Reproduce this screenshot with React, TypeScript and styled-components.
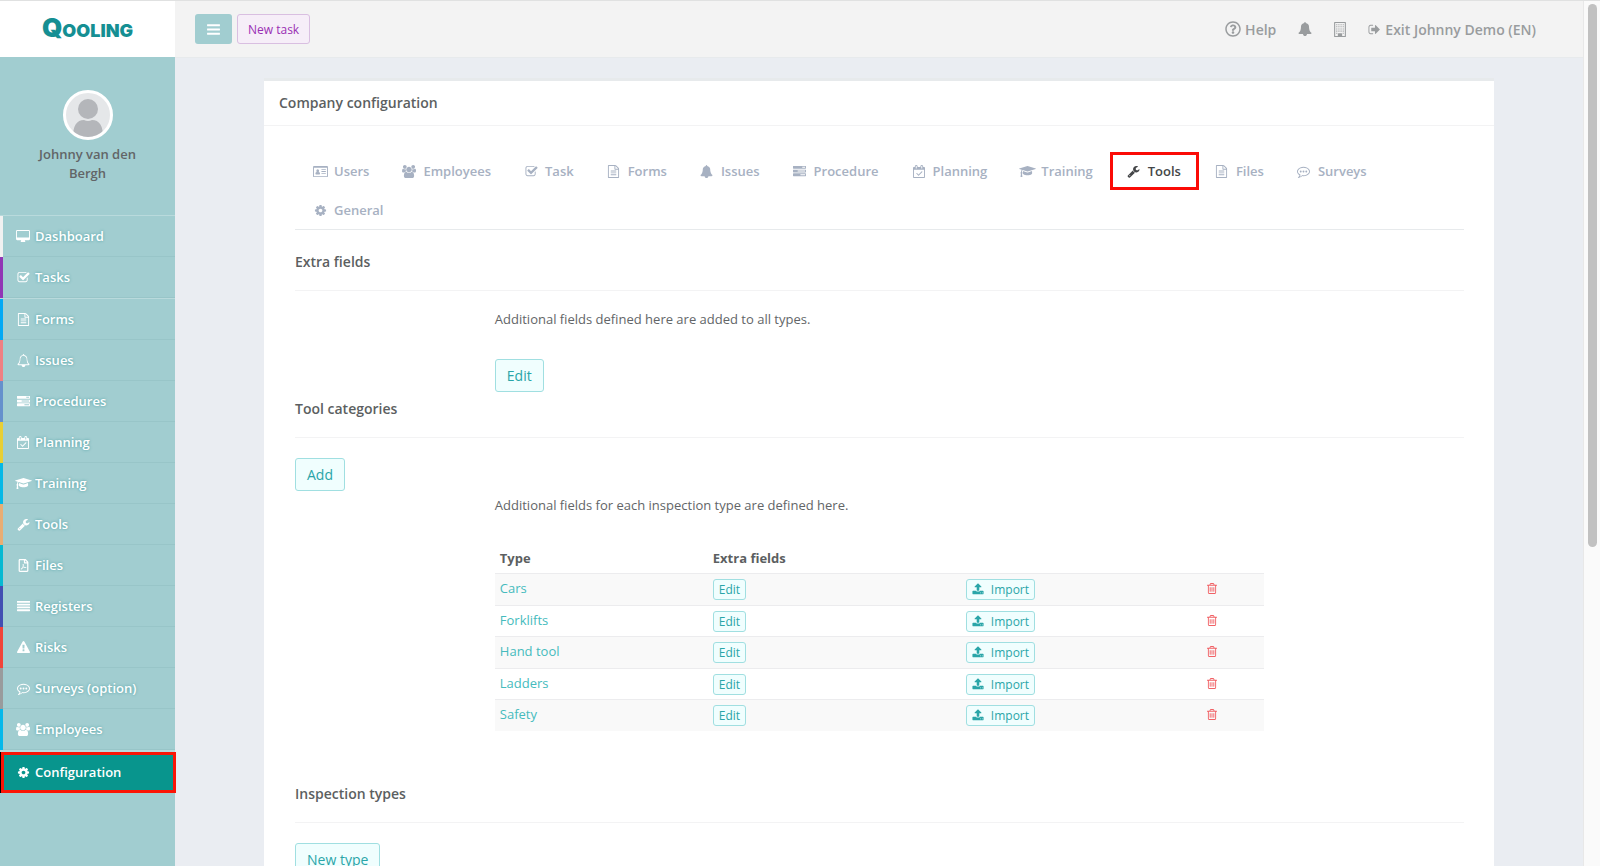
import React from 'react';
import styled, { createGlobalStyle, css } from 'styled-components';
import { FaRegQuestionCircle, FaRegFilePdf } from 'react-icons/fa';

const GlobalStyle = createGlobalStyle`
  *, *::before, *::after { box-sizing: border-box; }
  body {
    margin: 0;
    font: 400 13px/19px "Open Sans", "Noto Sans", sans-serif;
    color: #626567;
    background: #eaedf2;
  }
  a { color: inherit; text-decoration: none; }
  h1, h2, p, ul { margin: 0; padding: 0; }
  ul { list-style: none; }
  button { font: inherit; cursor: pointer; }
`;

/* ---------- icons ---------- */

type Glyph = { w: number; d: string };

const bar = (x: number, y: number, w: number) =>
  `M${x + w} ${y}v128q0 26-19 45t-45 19h-${w - 128}q-26 0-45-19t-19-45v-128q0-26 19-45t45-19h${w - 128}q26 0 45 19t19 45z`;

const dot = (x: number) =>
  `M${x} 896q0 53-37.5 90.5t-90.5 37.5-90.5-37.5-37.5-90.5 37.5-90.5 90.5-37.5 90.5 37.5 37.5 90.5z`;

const windows = [256, 512, 768, 1024]
  .flatMap((y) => [256, 512, 768, 1024].map((x) => `M${x} ${y}h128v128h-128z`))
  .join('');

const bellOutline =
  'M1728 1408q0 52-38 90t-90 38h-448q0 106-75 181t-181 75-181-75-75-181h-448q-52 0-90-38t-38-90q50-42 91-88t85-119.5 74.5-158.5 50-206 19.5-260q0-152 117-282.5t307-158.5q-8-19-8-39 0-40 28-68t68-28 68 28 28 68q0 20-8 39 190 28 307 158.5t117 282.5q0 139 19.5 260t50 206 74.5 158.5 85 119.5 91 88z';

const glyphs = {
  desktop: {
    w: 1920,
    d: 'M1792 992v-832q0-13-9.5-22.5t-22.5-9.5h-1600q-13 0-22.5 9.5t-9.5 22.5v832q0 13 9.5 22.5t22.5 9.5h1600q13 0 22.5-9.5t9.5-22.5zm128-832v1088q0 66-47 113t-113 47h-544q0 37 16 77.5t32 71 16 43.5q0 26-19 45t-45 19h-512q-26 0-45-19t-19-45q0-14 16-44t32-70 16-78h-544q-66 0-113-47t-47-113v-1088q0-66 47-113t113-47h1600q66 0 113 47t47 113z',
  },
  check: {
    w: 1792,
    d: 'M1472 930v318q0 119-84.5 203.5t-203.5 84.5h-832q-119 0-203.5-84.5t-84.5-203.5v-832q0-119 84.5-203.5t203.5-84.5h832q63 0 117 25 15 7 18 23 3 17-9 29l-49 49q-10 10-23 10-3 0-9-2-23-6-45-6h-832q-66 0-113 47t-47 113v832q0 66 47 113t113 47h832q66 0 113-47t47-113v-254q0-13 9-22l64-64q10-10 23-10 6 0 12 3 20 8 20 29zm231-489l-814 814q-24 24-57 24t-57-24l-430-430q-24-24-24-57t24-57l110-110q24-24 57-24t57 24l263 263 647-647q24-24 57-24t57 24l110 110q24 24 24 57t-24 57z',
  },
  file: {
    w: 1792,
    d: 'M1596 380q28 28 48 76t20 88v1152q0 40-28 68t-68 28h-1344q-40 0-68-28t-28-68v-1600q0-40 28-68t68-28h896q40 0 88 20t76 48zm-444-244v376h376q-10-29-22-41l-313-313q-12-12-41-22zm384 1528v-1024h-416q-40 0-68-28t-28-68v-416h-768v1536h1280zm-1024-864q0-14 9-23t23-9h704q14 0 23 9t9 23v64q0 14-9 23t-23 9h-704q-14 0-23-9t-9-23v-64zm736 224q14 0 23 9t9 23v64q0 14-9 23t-23 9h-704q-14 0-23-9t-9-23v-64q0-14 9-23t23-9h704zm0 256q14 0 23 9t9 23v64q0 14-9 23t-23 9h-704q-14 0-23-9t-9-23v-64q0-14 9-23t23-9h704z',
  },
  bell: { w: 1792, d: bellOutline },
  bellOpen: {
    w: 1792,
    d: `${bellOutline}M246 1408H1546Q1430 1270 1380 1090T1320 640Q1320 500 1210 400T896 256T582 400T472 640Q472 910 412 1090T246 1408z`,
  },
  tasks: {
    w: 1792,
    d: 'M1024 1408h640v-128h-640v128zm-384-512h1024v-128h-1024v128zm640-512h384v-128h-384v128zm512 832v256q0 26-19 45t-45 19h-1664q-26 0-45-19t-19-45v-256q0-26 19-45t45-19h1664q26 0 45 19t19 45zm0-512v256q0 26-19 45t-45 19h-1664q-26 0-45-19t-19-45v-256q0-26 19-45t45-19h1664q26 0 45 19t19 45zm0-512v256q0 26-19 45t-45 19h-1664q-26 0-45-19t-19-45v-256q0-26 19-45t45-19h1664q26 0 45 19t19 45z',
  },
  calendar: {
    w: 1664,
    d: 'M1303 964l-512 512q-10 9-23 9t-23-9l-288-288q-9-10-9-23t9-22l46-46q9-9 22-9t23 9l220 220 444-444q10-9 23-9t22 9l46 46q9 9 9 22t-9 23zm-1175 700h1408v-1024h-1408v1024zm384-1216v-288q0-14-9-23t-23-9h-64q-14 0-23 9t-9 23v288q0 14 9 23t23 9h64q14 0 23-9t9-23zm768 0v-288q0-14-9-23t-23-9h-64q-14 0-23 9t-9 23v288q0 14 9 23t23 9h64q14 0 23-9t9-23zm384-64v1280q0 52-38 90t-90 38h-1408q-52 0-90-38t-38-90v-1280q0-52 38-90t90-38h128v-96q0-66 47-113t113-47h64q66 0 113 47t47 113v96h384v-96q0-66 47-113t113-47h64q66 0 113 47t47 113v96h128q52 0 90 38t38 90z',
  },
  cap: {
    w: 2304,
    d: 'M1774 836l18 316q4 69-82 128t-235 93.5-323 34.5-323-34.5-235-93.5-82-128l18-316 574 181q22 7 48 7t48-7zm530-324q0 23-22 31l-1120 352q-4 1-10 1t-10-1l-652-206q-43 34-71 111.5t-34 178.5q63 36 63 109 0 69-58 107l58 433q2 14-8 25-9 11-24 11h-192q-15 0-24-11-10-11-8-25l58-433q-58-38-58-107 0-73 65-111 11-207 98-330l-333-104q-22-8-22-31t22-31l1120-352q4-1 10-1t10 1l1120 352q22 8 22 31z',
  },
  wrench: {
    w: 1792,
    d: 'M448 1472q0-26-19-45t-45-19-45 19-19 45 19 45 45 19 45-19 19-45zm644-420l-682 682q-37 37-90 37-52 0-91-37l-106-108q-38-36-38-90 0-53 38-91l681-681q39 98 114.5 173.5t173.5 114.5zm634-435q0 39-23 106-47 134-164.5 217.5t-258.5 83.5q-185 0-316.5-131.5t-131.5-316.5 131.5-316.5 316.5-131.5q58 0 121.5 16.5t107.5 46.5q16 11 16 28t-16 28l-293 169v224l193 107q5-3 79-48.5t135.5-81 70.5-35.5q15 0 23.5 10t8.5 25z',
  },
  lines: { w: 1792, d: [320, 704, 1088, 1472].map((y) => bar(0, y - 128, 1792)).join('') },
  menu: { w: 1792, d: [320, 832, 1344].map((y) => bar(128, y, 1536)).join('') },
  warning: {
    w: 1792,
    d: 'M1024 1375v-190q0-14-9.5-23.5t-22.5-9.5h-192q-13 0-22.5 9.5t-9.5 23.5v190q0 14 9.5 23.5t22.5 9.5h192q13 0 22.5-9.5t9.5-23.5zm-2-374l18-459q0-12-10-19-13-11-24-11h-220q-11 0-24 11-10 7-10 21l17 457q0 10 10 16.5t24 6.5h185q14 0 23.5-6.5t10.5-16.5zm-14-934l768 1408q35 63-2 126-17 29-46.5 46t-63.5 17h-1536q-34 0-63.5-17t-46.5-46q-37-63-2-126l768-1408q17-31 47-49t65-18 65 18 47 49z',
  },
  comment: {
    w: 1792,
    d: `${dot(640)}${dot(1024)}${dot(1408)}M896 384q-204 0-381.5 69.5t-282 187.5-104.5 255q0 112 71.5 213.5t201.5 175.5l87 50-27 96q-24 91-70 172 152-63 275-171l43-38 57 6q69 8 130 8 204 0 381.5-69.5t282-187.5 104.5-255-104.5-255-282-187.5-381.5-69.5zm896 512q0 174-120 321.5t-326 233-450 85.5q-70 0-145-8-198 175-460 242-49 14-114 22h-5q-15 0-27-10.5t-16-27.5v-1q-3-4-.5-12t2-10 4.5-9.5l6-9 7-8.5 8-9q7-8 31-34.5t34.5-38 31-39.5 32.5-51 27-59 26-76q-157-89-247.5-220t-90.5-281q0-174 120-321.5t326-233 450-85.5 450 85.5 326 233 120 321.5z`,
  },
  users: {
    w: 1920,
    d: 'M593 896q-162 5-265 128h-134q-82 0-138-40.5t-56-118.5q0-353 124-353 6 0 43.5 21t97.5 42.5 119 21.5q67 0 133-23-5 37-5 66 0 159 93 256zm1071 637q0 120-73 189.5t-194 69.5h-874q-121 0-194-69.5t-73-189.5q0-53 3.5-103.5t14-109 26.5-108.5 43-97.5 62-81 85.5-53.5 111.5-20q10 0 43 21.5t73 48 107 48 135 21.5 135-21.5 107-48 73-48 43-21.5q61 0 111.5 20t85.5 53.5 62 81 43 97.5 26.5 108.5 14 109 3.5 103.5zm-1024-1277q0 106-75 181t-181 75-181-75-75-181 75-181 181-75 181 75 75 181zm704 384q0 159-112.5 271.5t-271.5 112.5-271.5-112.5-112.5-271.5 112.5-271.5 271.5-112.5 271.5 112.5 112.5 271.5zm576 225q0 78-56 118.5t-138 40.5h-134q-103-123-265-128 93-97 93-256 0-29-5-66 66 23 133 23 59 0 119-21.5t97.5-42.5 43.5-21q124 0 124 353zm-128-609q0 106-75 181t-181 75-181-75-75-181 75-181 181-75 181 75 75 181z',
  },
  cog: {
    w: 1792,
    d: 'M1152 896q0-106-75-181t-181-75-181 75-75 181 75 181 181 75 181-75 75-181zm512-109v222q0 12-8 23t-20 13l-185 28q-19 54-39 91 35 50 107 138 10 12 10 25t-9 23q-27 37-99 108t-94 71q-12 0-26-9l-138-108q-44 23-91 38-16 136-29 186-7 28-36 28h-222q-14 0-24.5-8.5t-11.5-21.5l-28-184q-49-16-90-37l-141 107q-10 9-25 9-14 0-25-11-126-114-165-168-7-10-7-23 0-12 8-23 15-21 51-66.5t54-70.5q-27-50-41-99l-183-27q-13-2-21-12.5t-8-23.5v-222q0-12 8-23t19-13l186-28q14-46 39-92-40-57-107-138-10-12-10-24 0-10 9-23 26-36 98.5-107.5t94.5-71.5q13 0 26 10l138 107q44-23 91-38 16-136 29-186 7-28 36-28h222q14 0 24.5 8.5t11.5 21.5l28 184q49 16 90 37l142-107q9-9 24-9 13 0 25 10 129 119 165 170 7 8 7 22 0 12-8 23-15 21-51 66.5t-54 70.5q26 50 41 98l183 28q13 2 21 12.5t8 23.5z',
  },
  upload: {
    w: 1792,
    d: 'M1344 1472q0-26-19-45t-45-19-45 19-19 45 19 45 45 19 45-19 19-45zm256 0q0-26-19-45t-45-19-45 19-19 45 19 45 45 19 45-19 19-45zm128-224v320q0 40-28 68t-68 28h-1472q-40 0-68-28t-28-68v-320q0-40 28-68t68-28h427q21 56 70.5 92t110.5 36h256q61 0 110.5-36t70.5-92h427q40 0 68 28t28 68zm-325-648q-17 40-59 40h-256v448q0 26-19 45t-45 19h-256q-26 0-45-19t-19-45v-448h-256q-42 0-59-40-17-39 14-69l448-448q18-19 45-19t45 19l448 448q31 30 14 69z',
  },
  trash: {
    w: 1408,
    d: 'M512 736v576q0 14-9 23t-23 9h-64q-14 0-23-9t-9-23v-576q0-14 9-23t23-9h64q14 0 23 9t9 23zm256 0v576q0 14-9 23t-23 9h-64q-14 0-23-9t-9-23v-576q0-14 9-23t23-9h64q14 0 23 9t9 23zm256 0v576q0 14-9 23t-23 9h-64q-14 0-23-9t-9-23v-576q0-14 9-23t23-9h64q14 0 23 9t9 23zm128 724v-948h-896v948q0 22 7 40.5t14.5 27 10.5 8.5h832q3 0 10.5-8.5t14.5-27 7-40.5zm-672-1076h448l-48-117q-7-9-17-11h-317q-10 2-17 11zm928 32v64q0 14-9 23t-23 9h-96v948q0 83-47 143.5t-113 60.5h-832q-66 0-113-58.5t-47-141.5v-952h-96q-14 0-23-9t-9-23v-64q0-14 9-23t23-9h309l70-167q15-37 54-63t79-26h320q40 0 79 26t54 63l70 167h309q14 0 23 9t9 23z',
  },
  exit: {
    w: 1792,
    d: 'M704 1440q0 4 1 20t.5 26.5-3 23.5-10 19.5-20.5 6.5h-320q-119 0-203.5-84.5t-84.5-203.5v-704q0-119 84.5-203.5t203.5-84.5h320q13 0 22.5 9.5t9.5 22.5q0 4 1 20t.5 26.5-3 23.5-10 19.5-20.5 6.5h-320q-66 0-113 47t-47 113v704q0 66 47 113t113 47h312l11.5 1 11.5 3 8 5.5 7 9 2 13.5zm928-544q0 26-19 45l-544 544q-19 19-45 19t-45-19-19-45v-288h-448q-26 0-45-19t-19-45v-384q0-26 19-45t45-19h448v-288q0-26 19-45t45-19 45 19l544 544q19 19 19 45z',
  },
  building: {
    w: 1408,
    d: `M64 0H1344q64 0 64 64V1728q0 64-64 64H64q-64 0-64-64V64Q0 0 64 0zM128 128V1664H448V1408q0-64 64-64H896q64 0 64 64V1664H1280V128z${windows}M256 1280h128v128h-128zM1024 1280h128v128h-128z`,
  },
  card: {
    w: 2048,
    d: 'M128 128H1920q128 0 128 128V1536q0 128-128 128H128q-128 0-128-128V256Q0 128 128 128zM128 384V1536H1920V384zM640 576q192 0 192 208t-192 208-192-208 192-208zM480 960q160 110 320 0 160 30 160 260 0 100-100 100H420q-100 0-100-100 0-230 160-260zM1152 576h608v128h-608zM1152 832h608v128h-608zM1152 1088h608v128h-608z',
  },
} satisfies Record<string, Glyph>;

type GlyphName = keyof typeof glyphs;

const IconSvg = styled.svg`
  display: block;
  flex: none;
  fill: currentColor;
  fill-rule: evenodd;
`;

function Icon({ name, size = 13 }: { name: GlyphName | 'pdf'; size?: number }) {
  if (name === 'pdf') return <FaRegFilePdf size={size} aria-hidden />;
  const g = glyphs[name];
  return (
    <IconSvg viewBox={`0 0 ${g.w} 1792`} width={Math.round((g.w / 1792) * size)} height={size} aria-hidden>
      <path d={g.d} />
    </IconSvg>
  );
}

/* ---------- shell ---------- */

const Shell = styled.div`
  display: flex;
  height: 100vh;
  border-top: 1px solid #e0e1e1;
  overflow: hidden;
`;

const Sidebar = styled.nav`
  flex: none;
  width: 175px;
  background: #a1cdd0;
  position: relative;
  z-index: 1;
`;

const Brand = styled.a`
  display: flex;
  align-items: center;
  justify-content: center;
  height: 56px;
  background: #fff;
  color: #158f93;
  font: 900 18px/24px Inter, "Open Sans", sans-serif;
`;

const BrandInitial = styled.span`
  font-size: 26px;
`;

const Profile = styled.div`
  display: flex;
  flex-direction: column;
  align-items: center;
  gap: 5px;
  height: 158px;
  padding: 33px 30px 0;
  text-align: center;
  font-weight: 600;
`;

const Avatar = styled.svg`
  flex: none;
  width: 50px;
  height: 50px;
  border: 3px solid #fff;
  border-radius: 50%;
  background: #e5e7e9;
`;

const Menu = styled.ul`
  border-top: 1px solid #b9dadc;
`;

const MenuItem = styled.li<{ $stripe: string; $divider?: number }>`
  ${(p) => p.$divider && css`border-top: ${p.$divider}px solid #b9dadc;`}
  background: linear-gradient(to right, ${(p) => p.$stripe} 3px, transparent 3px);
`;

const MenuLink = styled.a<{ $active?: boolean }>`
  display: flex;
  align-items: center;
  height: 41px;
  margin-left: 3px;
  padding-left: 11px;
  gap: 3px;
  border-bottom: 1px solid #98c5c8;
  color: #fff;
  font-weight: 600;
  text-shadow: 0 0 3px #4a9ea2;
  ${(p) =>
    p.$active &&
    css`
      margin: 0 -1px 0 1px;
      padding-left: 10px;
      background: #08958d;
      border: 3px solid #fb1506;
      text-shadow: none;
    `}
`;

const MenuIcon = styled.span`
  display: flex;
  justify-content: center;
  width: 18px;
`;

const Main = styled.div`
  flex: 1;
  min-width: 0;
  display: flex;
  flex-direction: column;
`;

const Topbar = styled.header`
  flex: none;
  display: flex;
  align-items: center;
  justify-content: space-between;
  height: 57px;
  padding: 0 47px 0 20px;
  background: #f3f3f3;
  border-bottom: 1px solid #e7eaec;
`;

const TopGroup = styled.div<{ $gap: number }>`
  display: flex;
  align-items: center;
  gap: ${(p) => p.$gap}px;
`;

const TopLink = styled.a`
  display: flex;
  align-items: center;
  gap: 4px;
  color: #999c9e;
  font-size: 14px;
  font-weight: 600;
`;

const ToggleButton = styled.button`
  display: flex;
  align-items: center;
  justify-content: center;
  width: 37px;
  height: 30px;
  border: 0;
  border-radius: 3px;
  background: #a1cdd0;
  color: #fff;
`;

const TaskButton = styled.button`
  height: 30px;
  padding: 0 10px;
  border: 1px solid #d9bfe1;
  border-radius: 3px;
  background: #f6eef8;
  color: #9a2eb4;
  font-size: 12px;
`;

const Scrollable = styled.main`
  flex: 1;
  min-height: 0;
  overflow-y: auto;
  scrollbar-width: none;
  padding: 20px 24px 0;
`;

const ScrollTrack = styled.div`
  flex: none;
  width: 17px;
  padding: 3px 3px 0 4px;
  background: #fafafa;
  border-left: 1px solid #e8e8e8;
`;

const ScrollThumb = styled.div`
  height: 63%;
  width: 9px;
  border-radius: 5px;
  background: #c1c1c1;
`;

/* ---------- panel ---------- */

const Panel = styled.section`
  max-width: 1230px;
  margin: 0 auto;
  background: #fff;
  border-top: 3px solid #e7eaec;
`;

const PanelTitle = styled.h1`
  padding: 12px 15px;
  border-bottom: 1px solid #f3f3f4;
  font-size: 14px;
  line-height: 20px;
  font-weight: 600;
  color: #5c5f61;
`;

const PanelBody = styled.div`
  padding: 26px 30px 40px 31px;
`;

const Tabs = styled.ul`
  display: flex;
  flex-wrap: wrap;
  row-gap: 1px;
  margin-bottom: 15px;
  padding-left: 2px;
  border-bottom: 1px solid #e7eaec;
`;

const Tab = styled.a<{ $active?: boolean }>`
  display: flex;
  align-items: center;
  gap: 5px;
  height: 38px;
  padding: 0 17px 0 14px;
  color: #a7b1c2;
  font-weight: 600;
  ${(p) =>
    p.$active &&
    css`
      padding: 0 15px 0 12px;
      border: 3px solid #fb0b06;
      color: #444648;
    `}
`;

const TabIcon = styled.span`
  display: flex;
  justify-content: center;
  width: 18px;
`;

const SectionTitle = styled.h2`
  padding: 7px 0 18px;
  border-bottom: 1px solid #f3f3f4;
  font-size: 14px;
  line-height: 20px;
  font-weight: 600;
  color: #5c5f61;
`;

const Row = styled.div<{ $top: number; $bottom?: number }>`
  display: grid;
  grid-template-columns: 2fr 8fr 2fr;
  margin: 0 -15px;
  padding: ${(p) => p.$top}px 0 ${(p) => p.$bottom ?? 0}px;
`;

const Column = styled.div`
  grid-column: 2;
  padding: 0 15px;
`;

const ActionButton = styled.button<{ $small?: boolean }>`
  display: inline-flex;
  align-items: center;
  gap: 7px;
  height: 33px;
  padding: 0 11px;
  border: 1px solid #a0dfe1;
  border-radius: 3px;
  background: #f0fefe;
  color: #2aa5a8;
  font-size: 14px;
  ${(p) =>
    p.$small &&
    css`
      height: 21px;
      padding: 0 5px;
      font-size: 12px;
    `}
`;

const FieldAction = styled.div`
  display: flex;
  padding-top: 30px;
`;

const AddBar = styled.div`
  display: flex;
  padding-top: 20px;
`;

const TypeTable = styled.table`
  width: 100%;
  margin-top: 29px;
  border-collapse: collapse;
  table-layout: fixed;
`;

const HeadCell = styled.th<{ $width: string }>`
  width: ${(p) => p.$width};
  height: 29px;
  padding: 0 5px;
  text-align: left;
  font-weight: 700;
  color: #5c5f61;
`;

const BodyRow = styled.tr`
  height: 31px;
  border-top: 1px solid #ececee;
  &:nth-child(odd) {
    height: 32px;
    background: #f9f9f9;
  }
`;

const Cell = styled.td`
  padding: 5px 5px 4px;
  vertical-align: top;
  line-height: 19px;
`;

const CellActions = styled.div`
  display: flex;
`;

const TypeLink = styled.a`
  color: #45bbbd;
`;

const TrashButton = styled.button`
  display: flex;
  padding: 3px 0;
  border: 0;
  background: none;
  color: #f16165;
`;

/* ---------- data ---------- */

type Entry = { icon: GlyphName | 'pdf'; label: string };

const menu: (Entry & { stripe: string; divider?: number; active?: boolean })[] = [
  { icon: 'desktop', label: 'Dashboard', stripe: '#f1f1f1' },
  { icon: 'check', label: 'Tasks', stripe: '#9136b5' },
  { icon: 'file', label: 'Forms', stripe: '#03a9f4', divider: 1 },
  { icon: 'bellOpen', label: 'Issues', stripe: '#f08083' },
  { icon: 'tasks', label: 'Procedures', stripe: '#6590cc' },
  { icon: 'calendar', label: 'Planning', stripe: '#e8cf35' },
  { icon: 'cap', label: 'Training', stripe: '#05b8e6' },
  { icon: 'wrench', label: 'Tools', stripe: '#e9ad73' },
  { icon: 'pdf', label: 'Files', stripe: '#06b9d2' },
  { icon: 'lines', label: 'Registers', stripe: '#424fb2' },
  { icon: 'warning', label: 'Risks', stripe: '#f14439' },
  { icon: 'comment', label: 'Surveys (option)', stripe: '#999b9c' },
  { icon: 'users', label: 'Employees', stripe: '#05b8ea' },
  { icon: 'cog', label: 'Configuration', stripe: '#000', divider: 2, active: true },
];

const tabs: (Entry & { active?: boolean })[] = [
  { icon: 'card', label: 'Users' },
  { icon: 'users', label: 'Employees' },
  { icon: 'check', label: 'Task' },
  { icon: 'file', label: 'Forms' },
  { icon: 'bell', label: 'Issues' },
  { icon: 'tasks', label: 'Procedure' },
  { icon: 'calendar', label: 'Planning' },
  { icon: 'cap', label: 'Training' },
  { icon: 'wrench', label: 'Tools', active: true },
  { icon: 'file', label: 'Files' },
  { icon: 'comment', label: 'Surveys' },
  { icon: 'cog', label: 'General' },
];

const toolTypes = ['Cars', 'Forklifts', 'Hand tool', 'Ladders', 'Safety'];

export default function App() {
  return (
    <>
      <GlobalStyle />
      <Shell>
        <Sidebar>
          <Brand href="#">
            <span><BrandInitial>Q</BrandInitial>OOLING</span>
          </Brand>
          <Profile>
            <Avatar viewBox="0 0 44 44" aria-hidden>
              <path d="M7 44q0-17 11-17 4 2 8 0 11 0 11 17z" fill="#b4b6ba" />
              <circle cx="22" cy="16" r="10" fill="#b4b6ba" />
            </Avatar>
            <span>Johnny van den Bergh</span>
          </Profile>
          <Menu>
            {menu.map((m) => (
              <MenuItem key={m.label} $stripe={m.stripe} $divider={m.divider}>
                <MenuLink href="#" $active={m.active}>
                  <MenuIcon><Icon name={m.icon} /></MenuIcon>
                  {m.label}
                </MenuLink>
              </MenuItem>
            ))}
          </Menu>
        </Sidebar>

        <Main>
          <Topbar>
            <TopGroup $gap={5}>
              <ToggleButton aria-label="Toggle menu"><Icon name="menu" size={15} /></ToggleButton>
              <TaskButton>New task</TaskButton>
            </TopGroup>
            <TopGroup $gap={22}>
              <TopLink href="#"><FaRegQuestionCircle size={16} aria-hidden />Help</TopLink>
              <TopLink href="#" aria-label="Notifications"><Icon name="bell" size={14} /></TopLink>
              <TopLink href="#" aria-label="Company"><Icon name="building" size={15} /></TopLink>
              <TopLink href="#"><Icon name="exit" size={13} />Exit Johnny Demo (EN)</TopLink>
            </TopGroup>
          </Topbar>

          <Scrollable>
            <Panel>
              <PanelTitle>Company configuration</PanelTitle>
              <PanelBody>
                <Tabs>
                  {tabs.map((t) => (
                    <li key={t.label}>
                      <Tab href="#" $active={t.active}>
                        <TabIcon><Icon name={t.icon} /></TabIcon>
                        {t.label}
                      </Tab>
                    </li>
                  ))}
                </Tabs>

                <SectionTitle>Extra fields</SectionTitle>
                <Row $top={19}>
                  <Column>
                    <p>Additional fields defined here are added to all types.</p>
                    <FieldAction><ActionButton>Edit</ActionButton></FieldAction>
                  </Column>
                </Row>

                <SectionTitle>Tool categories</SectionTitle>
                <AddBar><ActionButton>Add</ActionButton></AddBar>
                <Row $top={5} $bottom={46}>
                  <Column>
                    <p>Additional fields for each inspection type are defined here.</p>
                    <TypeTable>
                      <thead>
                        <tr>
                          <HeadCell $width="213px">Type</HeadCell>
                          <HeadCell $width="253px">Extra fields</HeadCell>
                          <HeadCell $width="241px" aria-label="Import" />
                          <HeadCell $width="auto" aria-label="Delete" />
                        </tr>
                      </thead>
                      <tbody>
                        {toolTypes.map((name) => (
                          <BodyRow key={name}>
                            <Cell><TypeLink href="#">{name}</TypeLink></Cell>
                            <Cell>
                              <CellActions><ActionButton $small>Edit</ActionButton></CellActions>
                            </Cell>
                            <Cell>
                              <CellActions>
                                <ActionButton $small><Icon name="upload" size={12} />Import</ActionButton>
                              </CellActions>
                            </Cell>
                            <Cell>
                              <TrashButton aria-label={`Delete ${name}`}><Icon name="trash" size={13} /></TrashButton>
                            </Cell>
                          </BodyRow>
                        ))}
                      </tbody>
                    </TypeTable>
                  </Column>
                </Row>

                <SectionTitle>Inspection types</SectionTitle>
                <AddBar><ActionButton>New type</ActionButton></AddBar>
              </PanelBody>
            </Panel>
          </Scrollable>
        </Main>

        <ScrollTrack aria-hidden><ScrollThumb /></ScrollTrack>
      </Shell>
    </>
  );
}
